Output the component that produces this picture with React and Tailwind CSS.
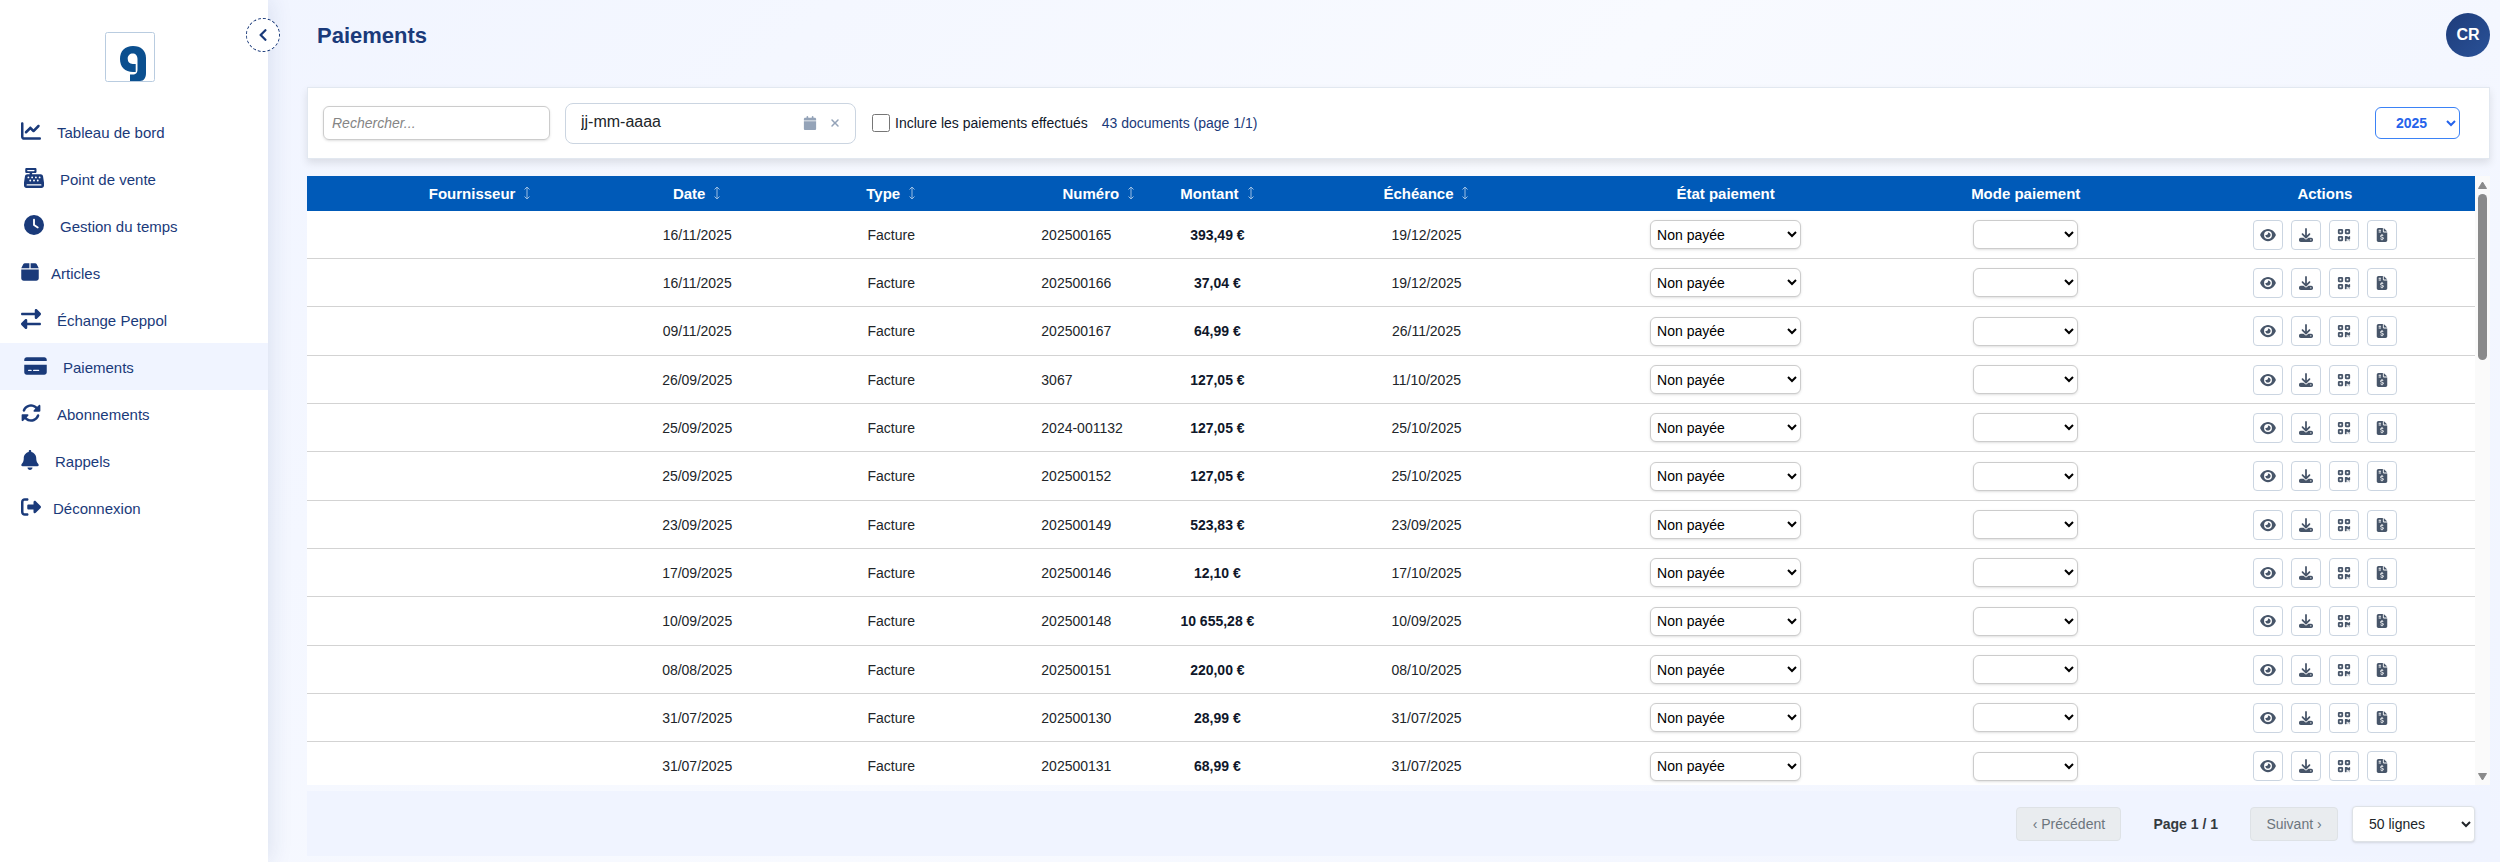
import React, { useState } from 'react';
import { FaChevronLeft } from 'react-icons/fa';
import {
  FaChartLine,
  FaCashRegister,
  FaClock,
  FaBox,
  FaRightLeft,
  FaCreditCard,
  FaRotate,
  FaBell,
  FaRightFromBracket,
  FaCalendar,
  FaEye,
  FaDownload,
  FaQrcode,
  FaFileInvoiceDollar,
  FaXmark,
} from 'react-icons/fa6';

const menuItems = [
  { label: 'Tableau de bord', icon: FaChartLine, iconClass: 'w-5', spacing: 'pl-[21px] gap-4' },
  { label: 'Point de vente', icon: FaCashRegister, iconClass: 'w-5', spacing: 'pl-6 gap-4' },
  { label: 'Gestion du temps', icon: FaClock, iconClass: 'w-5', spacing: 'pl-6 gap-4' },
  { label: 'Articles', icon: FaBox, iconClass: 'w-[18px]', spacing: 'pl-[21px] gap-3' },
  { label: 'Échange Peppol', icon: FaRightLeft, iconClass: 'w-5', spacing: 'pl-[21px] gap-4' },
  { label: 'Paiements', icon: FaCreditCard, iconClass: 'w-[23px]', spacing: 'pl-6 gap-4' },
  { label: 'Abonnements', icon: FaRotate, iconClass: 'w-5', spacing: 'pl-[21px] gap-4' },
  { label: 'Rappels', icon: FaBell, iconClass: 'w-[18px]', spacing: 'pl-[21px] gap-4' },
  { label: 'Déconnexion', icon: FaRightFromBracket, iconClass: 'w-5', spacing: 'pl-[21px] gap-3' },
];

const columns = [
  { label: 'Fournisseur', sortable: true, width: 'w-[346px]' },
  { label: 'Date', sortable: true, width: 'w-[88px]' },
  { label: 'Type', sortable: true, width: 'w-[300px]' },
  { label: 'Numéro', sortable: true, width: 'w-[115px]' },
  { label: 'Montant', sortable: true, width: 'w-[122px]' },
  { label: 'Échéance', sortable: true, width: 'w-[296px]' },
  { label: 'État paiement', sortable: false, width: 'w-[302px]' },
  { label: 'Mode paiement', sortable: false, width: 'w-[298px]' },
  { label: 'Actions', sortable: false, width: 'w-[300px]' },
];

const payments = [
  { date: '16/11/2025', numero: '202500165', montant: '393,49 €', echeance: '19/12/2025' },
  { date: '16/11/2025', numero: '202500166', montant: '37,04 €', echeance: '19/12/2025' },
  { date: '09/11/2025', numero: '202500167', montant: '64,99 €', echeance: '26/11/2025' },
  { date: '26/09/2025', numero: '3067', montant: '127,05 €', echeance: '11/10/2025' },
  { date: '25/09/2025', numero: '2024-001132', montant: '127,05 €', echeance: '25/10/2025' },
  { date: '25/09/2025', numero: '202500152', montant: '127,05 €', echeance: '25/10/2025' },
  { date: '23/09/2025', numero: '202500149', montant: '523,83 €', echeance: '23/09/2025' },
  { date: '17/09/2025', numero: '202500146', montant: '12,10 €', echeance: '17/10/2025' },
  { date: '10/09/2025', numero: '202500148', montant: '10 655,28 €', echeance: '10/09/2025' },
  { date: '08/08/2025', numero: '202500151', montant: '220,00 €', echeance: '08/10/2025' },
  { date: '31/07/2025', numero: '202500130', montant: '28,99 €', echeance: '31/07/2025' },
  { date: '31/07/2025', numero: '202500131', montant: '68,99 €', echeance: '31/07/2025' },
];

const actions = [
  { label: 'Voir', icon: FaEye },
  { label: 'Télécharger', icon: FaDownload },
  { label: 'QR code', icon: FaQrcode },
  { label: 'Facture', icon: FaFileInvoiceDollar },
];

const Logo = () => (
  <svg className="w-[50px] h-[50px]" viewBox="0 0 50 50" fill="none" aria-hidden="true">
    <rect x="0.5" y="0.5" width="49" height="49" rx="2" fill="#fff" stroke="#b9cce0" />
    <path
      d="M28 14c8 0 13 4.500 13 12v15c0 4.500-2 8-6 8H25v-6.500h2.500c3.500 0 5-2 5-5V27c0-3.500-2-5.500-4.800-5.500s-5 2-5 5.300 1.800 5.200 5 5.200h3v8H28c-8 0-13-5-13-13s5-13 13-13z"
      fill="#0b4f8f"
    />
  </svg>
);

const SortArrow = () => (
  <svg className="w-2 h-4 opacity-60" viewBox="0 0 8 16" fill="none" stroke="currentColor" aria-hidden="true">
    <path d="M4 2v12M1.500 4.500 4 2l2.500 2.500M1.500 11.500 4 14l2.500-2.500" />
  </svg>
);

const Sidebar = () => (
  <aside className="relative z-10 w-[268px] shrink-0 bg-white shadow-[4px_0_20px_rgba(26,58,122,0.1)]">
    <div className="flex justify-center pt-8 pr-2 pb-[26px]">
      <Logo />
    </div>
    <nav>
      {menuItems.map(({ label, icon: Icon, iconClass, spacing }) => (
        <a
          key={label}
          href="#"
          className={`flex items-center h-[47px] pt-[3px] text-[15px] text-[#1a3a7a] ${spacing} ${
            label === 'Paiements' ? 'bg-[#f0f4ff]' : ''
          }`}
        >
          <Icon className={`h-5 mb-1 shrink-0 ${iconClass}`} />
          <span>{label}</span>
        </a>
      ))}
    </nav>
    <button
      aria-label="Réduire le menu"
      className="absolute top-[18px] -right-3 flex items-center justify-center w-[34px] h-[34px] rounded-full border border-dashed border-[#1a3a7a] bg-white text-[#1a3a7a]"
    >
      <FaChevronLeft className="w-3.5 h-3.5" />
    </button>
  </aside>
);

const Toolbar = ({ includePaid, setIncludePaid }) => (
  <div className="flex items-center h-[72px] px-[15px] bg-white border border-[#e2e8f0] shadow-[0_4px_8px_rgba(0,0,0,0.1)]">
    <input
      type="text"
      aria-label="Rechercher"
      placeholder="Rechercher..."
      className="w-[227px] h-[34px] px-2 text-sm italic rounded-md border border-[#ccc] shadow-sm placeholder:text-[#858585]"
    />
    <div className="flex items-center w-[291px] h-[41px] ml-[15px] pl-[15px] pr-3 rounded-lg border border-[#cbd5e1] text-[#94a3b8]">
      <input
        type="text"
        aria-label="Date"
        placeholder="jj-mm-aaaa"
        className="flex-1 min-w-0 pb-0.5 text-base placeholder:text-[#212529]"
      />
      <FaCalendar className="w-3.5 h-3.5" />
      <button aria-label="Effacer la date" className="ml-3 mr-0.5">
        <FaXmark className="w-3 h-3" />
      </button>
    </div>
    <label className="flex items-center ml-4 gap-[5px] text-sm text-[#0f172a]">
      <input
        type="checkbox"
        className="w-[18px] h-[18px]"
        checked={includePaid}
        onChange={(e) => setIncludePaid(e.target.checked)}
      />
      Inclure les paiements effectués
    </label>
    <span className="ml-[14px] text-sm text-[#1a3a7a]">43 documents (page 1/1)</span>
    <select
      aria-label="Année"
      defaultValue="2025"
      className="w-[85px] h-8 ml-auto mr-[14px] pl-4 text-sm font-bold text-[#2563eb] bg-white rounded-md border border-[#3b82f6]"
    >
      <option>2025</option>
      <option>2024</option>
    </select>
  </div>
);

const PaymentsTable = () => (
  <div className="flex flex-1 min-h-0">
    <div className="flex-1 min-w-0 overflow-hidden bg-white">
      <table className="w-full table-fixed border-separate border-spacing-0 text-sm text-[#212529]">
        <thead>
          <tr className="h-[35px] bg-[#005ab8] text-white text-[15px]">
            {columns.map(({ label, sortable, width }) => (
              <th key={label} className={`p-0 font-bold ${width}`}>
                <div className="flex items-center justify-center gap-2">
                  {label}
                  {sortable && <SortArrow />}
                </div>
              </th>
            ))}
          </tr>
        </thead>
        <tbody className="text-center">
          {payments.map((payment) => (
            <tr
              key={payment.numero}
              className="h-12 nth-[3n]:h-[49px] [&>td]:p-0 [&>td]:border-b [&>td]:border-[#d3d3d3]"
            >
              <td></td>
              <td>{payment.date}</td>
              <td>Facture</td>
              <td className="text-left">{payment.numero}</td>
              <td className="font-bold text-[#0f172a]">{payment.montant}</td>
              <td>{payment.echeance}</td>
              <td>
                <select
                  aria-label="État paiement"
                  className="w-[151px] h-[29px] pr-1 pl-0.5 bg-white text-black rounded-md border border-[#ccc] shadow-sm"
                >
                  <option>Non payée</option>
                  <option>Payée</option>
                </select>
              </td>
              <td>
                <select
                  aria-label="Mode paiement"
                  className="w-[105px] h-[29px] pr-1 pl-0.5 bg-white text-black rounded-md border border-[#ccc] shadow-sm"
                >
                  <option></option>
                  <option>Virement</option>
                </select>
              </td>
              <td>
                <div className="flex justify-center gap-2">
                  {actions.map(({ label, icon: Icon }) => (
                    <button
                      key={label}
                      aria-label={label}
                      className="flex items-center justify-center w-[30px] h-[30px] rounded-sm border border-[#cbd5e1] bg-white text-[#475569]"
                    >
                      <Icon className="w-4 h-3.5" />
                    </button>
                  ))}
                </div>
              </td>
            </tr>
          ))}
        </tbody>
      </table>
    </div>
    {/* scrollbar */}
    <div className="flex flex-col items-center w-[15px] py-1 bg-[#fafafa] text-[#8a8a8a]">
      <svg className="w-[9px] h-[9px] mt-px mb-1" viewBox="0 0 9 9" fill="currentColor" aria-hidden="true">
        <path d="M4.500 1 8.500 7.500h-8z" stroke="currentColor" strokeLinejoin="round" />
      </svg>
      <div className="w-[9px] h-[166px] rounded-full bg-[#8a8a8a]"></div>
      <svg className="w-[9px] h-[9px] mt-auto" viewBox="0 0 9 9" fill="currentColor" aria-hidden="true">
        <path d="M4.500 8 8.500 1.500h-8z" stroke="currentColor" strokeLinejoin="round" />
      </svg>
    </div>
  </div>
);

const Pagination = () => (
  <div className="flex items-center justify-end h-[65px] my-1.5 pr-[15px] text-sm bg-[#f0f4ff]">
    <button
      disabled
      className="w-[105px] h-[34px] rounded-sm border border-[#dee2e6] bg-[#e9ecef] text-[#6c757d]"
    >
      ‹ Précédent
    </button>
    <span className="mx-8 font-bold text-[#343a40]">Page 1 / 1</span>
    <button
      disabled
      className="w-[88px] h-[34px] rounded-sm border border-[#dee2e6] bg-[#e9ecef] text-[#6c757d]"
    >
      Suivant ›
    </button>
    <select
      aria-label="Lignes par page"
      defaultValue="50 lignes"
      className="w-[123px] h-9 ml-[14px] pl-3 bg-white text-[#212529] rounded-sm border border-[#dee2e6] shadow-sm"
    >
      <option>20 lignes</option>
      <option>50 lignes</option>
    </select>
  </div>
);

const App = () => {
  const [includePaid, setIncludePaid] = useState(false);

  return (
    <div className="flex h-screen overflow-hidden bg-[linear-gradient(135deg,#f0f4ff,#f8faff,#f0f4ff)] font-['Liberation_Sans',Arial,sans-serif]">
      <Sidebar />
      <main className="flex flex-1 flex-col min-w-0 pl-[39px] pr-2.5">
        <header className="flex items-center justify-between h-[87px] pb-[17px] pl-2.5">
          <h1 className="text-[22px] font-bold text-[#1a3a7a]">Paiements</h1>
          <div className="flex items-center justify-center w-11 h-11 rounded-full bg-linear-to-br from-[#1e3c7a] to-[#2a5298] text-base font-bold text-white">
            CR
          </div>
        </header>
        <Toolbar includePaid={includePaid} setIncludePaid={setIncludePaid} />
        <div className="flex flex-1 flex-col min-h-0 pt-[17px]">
          <PaymentsTable />
          <Pagination />
        </div>
      </main>
    </div>
  );
};

export default App;
